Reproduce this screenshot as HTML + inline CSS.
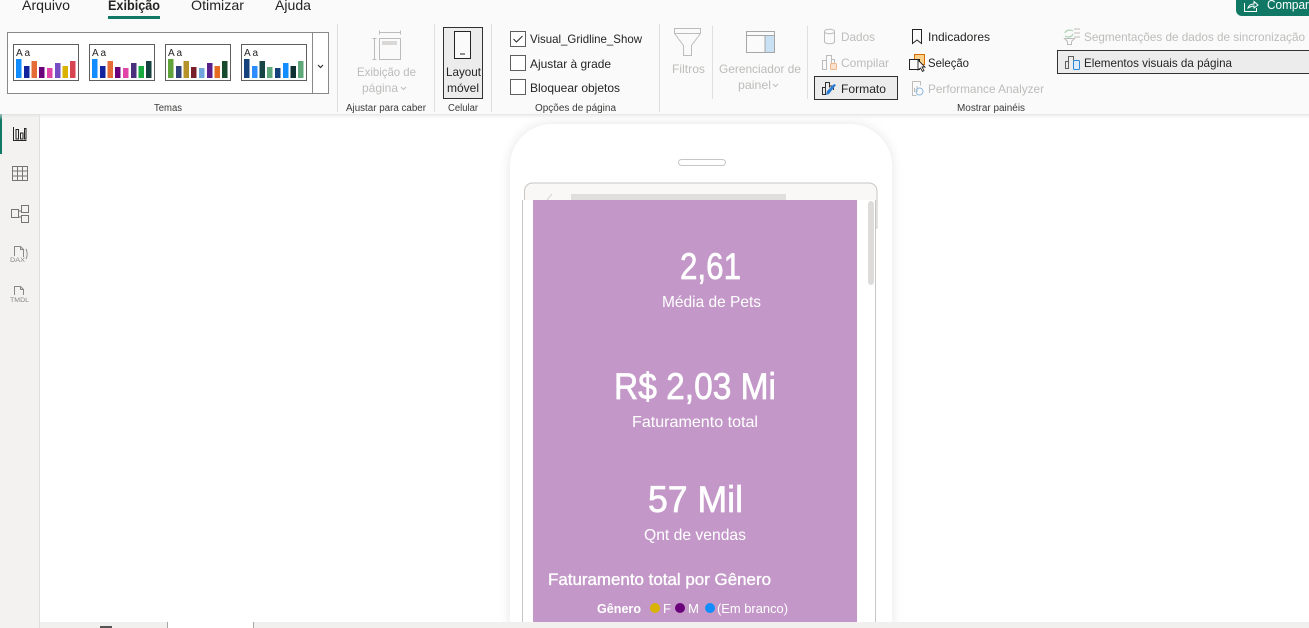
<!DOCTYPE html>
<html lang="pt"><head><meta charset="utf-8"><title>Power BI Desktop</title>
<style>
html,body{margin:0;padding:0;width:1309px;height:628px;overflow:hidden;background:#fff}
svg{display:block}
text{font-family:"Liberation Sans",sans-serif;fill:#252423}
.d{fill:#bdbcba}
.s{font-size:10px;fill:#3b3a39}
.t{font-size:12px}
.w{fill:#fff}
.b{stroke:#fff;stroke-width:.7px}
.m{stroke:#fff;stroke-width:.35px}
.sep{stroke:#e1dfdd;stroke-width:1}
.ic{fill:none;stroke:#bdbcba;stroke-width:1}
</style></head><body>
<svg width="1309" height="628" viewBox="0 0 1309 628" xmlns="http://www.w3.org/2000/svg">
<defs>
<filter id="sh" x="-20%" y="-20%" width="140%" height="140%"><feGaussianBlur stdDeviation="6"/></filter>
<linearGradient id="rs" x1="0" y1="0" x2="0" y2="1"><stop offset="0" stop-color="#d9d9d9"/><stop offset="1" stop-color="#fff" stop-opacity="0"/></linearGradient>
<clipPath id="page"><rect width="1309" height="628"/></clipPath>
</defs>
<g clip-path="url(#page)">
<rect width="1309" height="628" fill="#fff"/>
<!-- phone -->
<path d="M510 628V166a42 42 0 0 1 42-42H850a42 42 0 0 1 42 42V628Z" fill="#000" opacity=".1" filter="url(#sh)"/>
<path d="M510 628V166a42 42 0 0 1 42-42H850a42 42 0 0 1 42 42V628Z" fill="#fff"/>
<rect x="678.500" y="159.500" width="47" height="6" rx="3" fill="#fff" stroke="#c8c6c4"/>
<path d="M524.500 228V191a8 8 0 0 1 8-8H869a8 8 0 0 1 8 8V228Z" fill="#f9f8f6" stroke="#c8c6c4"/>
<rect x="571" y="194" width="215" height="6" fill="#e1dfdc"/>
<path d="M552 194l-5 6" stroke="#d8d6d4" fill="none"/>
<rect x="523" y="200" width="353" height="428" fill="#fff"/>
<path d="M522.500 200V628M875.500 200V628" stroke="#c8c6c4" fill="none"/>
<rect x="533" y="200" width="324" height="428" fill="#c398c8"/>
<rect x="868" y="201" width="6" height="84" rx="3" fill="#dedcda"/>
<text x="680" y="279" class="w b" font-size="37" textLength="61" lengthAdjust="spacingAndGlyphs">2,61</text>
<text x="662" y="307" class="w" font-size="16" textLength="99" lengthAdjust="spacingAndGlyphs">Média de Pets</text>
<text x="614" y="399" class="w b" font-size="37" textLength="162" lengthAdjust="spacingAndGlyphs">R$ 2,03 Mi</text>
<text x="632" y="427" class="w" font-size="16" textLength="126" lengthAdjust="spacingAndGlyphs">Faturamento total</text>
<text x="648" y="512" class="w b" font-size="37" textLength="95" lengthAdjust="spacingAndGlyphs">57 Mil</text>
<text x="644" y="540" class="w" font-size="16" textLength="102" lengthAdjust="spacingAndGlyphs">Qnt de vendas</text>
<text x="548" y="585" class="w m" font-size="16.500" textLength="223" lengthAdjust="spacingAndGlyphs">Faturamento total por Gênero</text>
<text x="597" y="613" class="w" font-size="13" font-weight="700" textLength="44" lengthAdjust="spacingAndGlyphs">Gênero</text>
<circle cx="655" cy="608" r="5" fill="#d9b300"/>
<text x="663" y="613" class="w" font-size="13" textLength="6">F</text>
<circle cx="680" cy="608" r="5" fill="#6b007b"/>
<text x="688" y="613" class="w" font-size="13" textLength="11" lengthAdjust="spacingAndGlyphs">M</text>
<circle cx="710" cy="608" r="5" fill="#118dff"/>
<text x="717" y="613" class="w" font-size="13" textLength="71" lengthAdjust="spacingAndGlyphs">(Em branco)</text>
<!-- bottom strip -->
<rect x="40" y="622" width="1269" height="6" fill="#f1f0ee"/>
<rect x="168" y="622" width="85" height="6" fill="#fff"/>
<path d="M167.500 622V628M253.500 622V628" stroke="#a8a6a4"/>
<rect x="100" y="626" width="12" height="2" fill="#555"/>
<!-- left rail -->
<rect x="0" y="114" width="39" height="514" fill="#f3f2f1"/>
<rect x="39" y="114" width="1" height="514" fill="#e1dfdd"/>
<rect x="0" y="114" width="2" height="40" fill="#117865"/>
<path d="M13.500 127V140.500H26.500M16 129.500h2.500V139H16ZM20.500 133h2.500v6h-2.500ZM24.500 128.500H26V139h-1.500Z" fill="none" stroke="#252423"/>
<path d="M12.500 166.500h15v14h-15ZM12.500 171h15M12.500 176h15M17.500 167v14M22.500 167v14" fill="none" stroke="#757575"/>
<path d="M11.500 209.500h7v8h-7ZM21.500 205.500h7v7h-7ZM21.500 215.500h7v7h-7ZM18.500 211h3M18.500 217h3" fill="none" stroke="#757575"/>
<path d="M14.500 256v-9.500h6l3 3V257M20.500 246.500v3h3M26 249c1.500 3 1.500 7 0 10" fill="none" stroke="#8a8886"/>
<text x="10" y="262" font-size="6.500" style="fill:#8a8886" textLength="15" lengthAdjust="spacingAndGlyphs">DAX</text>
<path d="M14.500 295v-8.500h6l3 3V295M20.500 286.500v3h3" fill="none" stroke="#8a8886"/>
<text x="10" y="302" font-size="6.500" style="fill:#8a8886" textLength="19" lengthAdjust="spacingAndGlyphs">TMDL</text>
<!-- ribbon -->
<rect x="0" y="114" width="1309" height="6" fill="url(#rs)" opacity=".7"/>
<rect x="0" y="0" width="1309" height="114" fill="#fafafa"/>
<text x="22" y="10" font-size="14" textLength="48" lengthAdjust="spacingAndGlyphs">Arquivo</text>
<text x="108" y="10" font-size="14" font-weight="700" textLength="52" lengthAdjust="spacingAndGlyphs">Exibição</text>
<rect x="108" y="16" width="52" height="3" fill="#117865"/>
<text x="191" y="10" font-size="14" textLength="53" lengthAdjust="spacingAndGlyphs">Otimizar</text>
<text x="275" y="10" font-size="14" textLength="36" lengthAdjust="spacingAndGlyphs">Ajuda</text>
<!-- gallery -->
<rect x="7.500" y="32.500" width="321" height="61" fill="#fff" stroke="#8a8886"/>
<path d="M312.500 33V93" stroke="#8a8886"/>
<path d="M318 65l2.500 2.500L323 65" fill="none" stroke="#323130" stroke-width="1.200"/>
<g><rect x="13.500" y="44.500" width="65" height="36" fill="#fff" stroke="#605e5c"/>
<text x="16" y="56" font-size="10" textLength="14">Aa</text>
<rect x="16" y="59" width="5.500" height="19" fill="#118dff"/><rect x="24" y="66" width="5.500" height="12" fill="#12239e"/><rect x="31.500" y="61" width="5.500" height="17" fill="#e66c37"/><rect x="39" y="67" width="5.500" height="11" fill="#6b007b"/><rect x="47" y="68" width="5.500" height="10" fill="#e044a7"/><rect x="55" y="63" width="5.500" height="15" fill="#744ec2"/><rect x="62.500" y="66" width="5.500" height="12" fill="#d9b300"/><rect x="70" y="61" width="5.500" height="17" fill="#d64550"/></g>
<g transform="translate(76)"><rect x="13.500" y="44.500" width="65" height="36" fill="#fff" stroke="#605e5c"/>
<text x="16" y="56" font-size="10" textLength="14">Aa</text>
<rect x="16" y="59" width="5.500" height="19" fill="#118dff"/><rect x="24" y="66" width="5.500" height="12" fill="#12239e"/><rect x="31.500" y="61" width="5.500" height="17" fill="#e66c37"/><rect x="39" y="67" width="5.500" height="11" fill="#6b007b"/><rect x="47" y="68" width="5.500" height="10" fill="#e044a7"/><rect x="55" y="63" width="5.500" height="15" fill="#4a2f7c"/><rect x="62.500" y="66" width="5.500" height="12" fill="#1aab40"/><rect x="70" y="61" width="5.500" height="17" fill="#15413f"/></g>
<g transform="translate(152)"><rect x="13.500" y="44.500" width="65" height="36" fill="#fff" stroke="#605e5c"/>
<text x="16" y="56" font-size="10" textLength="14">Aa</text>
<rect x="16" y="59" width="5.500" height="19" fill="#5fa33a"/><rect x="24" y="66" width="5.500" height="12" fill="#2e3f7a"/><rect x="31.500" y="61" width="5.500" height="17" fill="#b5932a"/><rect x="39" y="67" width="5.500" height="11" fill="#7a1f2a"/><rect x="47" y="68" width="5.500" height="10" fill="#6fa5dc"/><rect x="55" y="63" width="5.500" height="15" fill="#5b1f8c"/><rect x="62.500" y="66" width="5.500" height="12" fill="#e66c1f"/><rect x="70" y="61" width="5.500" height="17" fill="#174a2a"/></g>
<g transform="translate(228)"><rect x="13.500" y="44.500" width="65" height="36" fill="#fff" stroke="#605e5c"/>
<text x="16" y="56" font-size="10" textLength="14">Aa</text>
<rect x="16" y="59" width="5.500" height="19" fill="#15427a"/><rect x="24" y="66" width="5.500" height="12" fill="#2d8cff"/><rect x="31.500" y="61" width="5.500" height="17" fill="#174545"/><rect x="39" y="67" width="5.500" height="11" fill="#5fa87a"/><rect x="47" y="68" width="5.500" height="10" fill="#15427a"/><rect x="55" y="63" width="5.500" height="15" fill="#118dff"/><rect x="62.500" y="66" width="5.500" height="12" fill="#0f3030"/><rect x="70" y="61" width="5.500" height="17" fill="#5fa87a"/></g>
<text x="154" y="111" class="s" textLength="28" lengthAdjust="spacingAndGlyphs">Temas</text>
<path class="sep" d="M337.500 24V112M434.500 24V112M491.500 24V112M659.500 24V112M712.500 26V99M807.500 26V99"/>
<!-- page view -->
<path class="ic" d="M379.500 32.500H400M379.500 30.500v4M400.500 30.500v4M372.500 38.500h4M372.500 59.500h4M374.500 38.500v21M379.500 38.500h21v21h-21Z"/>
<rect x="382" y="41" width="15" height="4" fill="#d9d8d6"/>
<text x="357" y="76" class="t d" textLength="59" lengthAdjust="spacingAndGlyphs">Exibição de</text>
<text x="362" y="92" class="t d" textLength="36" lengthAdjust="spacingAndGlyphs">página</text>
<path d="M401 87l2.500 2.500L406 87" fill="none" stroke="#bdbcba"/>
<text x="346" y="111" class="s" textLength="80" lengthAdjust="spacingAndGlyphs">Ajustar para caber</text>
<!-- layout -->
<rect x="443.500" y="27.500" width="39" height="71" fill="#ececec" stroke="#323130"/>
<rect x="454.500" y="31.500" width="16" height="27" fill="#fafafa" stroke="#252423"/>
<path d="M460 54h5" stroke="#252423"/>
<text x="446" y="76" class="t" textLength="35" lengthAdjust="spacingAndGlyphs">Layout</text>
<text x="447" y="92" class="t" textLength="32" lengthAdjust="spacingAndGlyphs">móvel</text>
<text x="448" y="111" class="s" textLength="30" lengthAdjust="spacingAndGlyphs">Celular</text>
<!-- page options -->
<rect x="510.500" y="31.500" width="15" height="15" fill="#fff" stroke="#605e5c"/>
<path d="M513.500 39l3 3 6-6" fill="none" stroke="#252423"/>
<rect x="510.500" y="55.500" width="15" height="15" fill="#fff" stroke="#605e5c"/>
<rect x="510.500" y="79.500" width="15" height="15" fill="#fff" stroke="#605e5c"/>
<text x="530" y="43" class="t" textLength="112" lengthAdjust="spacingAndGlyphs">Visual_Gridline_Show</text>
<text x="530" y="68" class="t" textLength="81" lengthAdjust="spacingAndGlyphs">Ajustar à grade</text>
<text x="530" y="92" class="t" textLength="90" lengthAdjust="spacingAndGlyphs">Bloquear objetos</text>
<text x="535" y="111" class="s" textLength="81" lengthAdjust="spacingAndGlyphs">Opções de página</text>
<!-- filters -->
<path class="ic" d="M674.500 28.500h26v5l-9 12v10h-8v-10l-9-12ZM674.500 33.500h26" stroke-width="1.200"/>
<text x="672" y="73" class="t d" textLength="33" lengthAdjust="spacingAndGlyphs">Filtros</text>
<rect x="765" y="36" width="9" height="16" fill="#c7e0f4"/>
<rect x="746.500" y="31.500" width="28" height="21" fill="none" stroke="#a8a6a4"/>
<path d="M747 35.500h27M765 36v16" stroke="#a8a6a4"/>
<text x="719" y="73" class="t d" textLength="82" lengthAdjust="spacingAndGlyphs">Gerenciador de</text>
<text x="738" y="89" class="t d" textLength="33" lengthAdjust="spacingAndGlyphs">painel</text>
<path d="M773 84l2.500 2.500L778 84" fill="none" stroke="#bdbcba"/>
<!-- panes -->
<path class="ic" d="M824.500 31.500c0-3 10-3 10 0v10c0 3-10 3-10 0ZM824.500 31.500c0 3 10 3 10 0"/>
<text x="841" y="41" class="t d" textLength="34" lengthAdjust="spacingAndGlyphs">Dados</text>
<path class="ic" d="M822.500 69.500v-9h4v9ZM826.500 69.500v-14h5v8M831.500 59.500h3v4"/>
<rect x="830.500" y="63.500" width="6" height="6" rx="1" fill="#fbe0cb" stroke="#f0b98d"/>
<text x="841" y="67" class="t d" textLength="48" lengthAdjust="spacingAndGlyphs">Compilar</text>
<rect x="814.500" y="76.500" width="83" height="23" fill="#ececec" stroke="#323130"/>
<path d="M822.500 94.500v-7h3v7ZM825.500 94.500v-12h4v5M829.500 86h4v4" fill="none" stroke="#323130"/>
<path d="M826 95l3-1 7-9-2-1-7 7Z" fill="#2b7cd3"/>
<text x="841" y="93" class="t" textLength="45" lengthAdjust="spacingAndGlyphs">Formato</text>
<path d="M912.500 29.500h9v14l-4.500-3.500-4.500 3.500Z" fill="none" stroke="#252423"/>
<text x="928" y="41" class="t" textLength="62" lengthAdjust="spacingAndGlyphs">Indicadores</text>
<rect x="914.500" y="54.500" width="10" height="10" fill="#fbd28b" stroke="#d86c00"/>
<rect x="909.500" y="59.500" width="10" height="10" fill="#fafafa" stroke="#252423"/>
<path d="M918 60v10l2.500-2 2 3.500 1.500-1-2-3.500 3 0Z" fill="#fff" stroke="#252423" stroke-width=".9"/>
<text x="928" y="67" class="t" textLength="41" lengthAdjust="spacingAndGlyphs">Seleção</text>
<path class="ic" d="M912.500 81.500h8v4M912.500 81.500v14h4M914.500 92v-4M917 92v-6"/>
<circle cx="919.500" cy="91.500" r="3.500" fill="none" stroke="#8dbbe3"/>
<text x="928" y="93" class="t d" textLength="116" lengthAdjust="spacingAndGlyphs">Performance Analyzer</text>
<text x="957" y="111" class="s" textLength="68" lengthAdjust="spacingAndGlyphs">Mostrar painéis</text>
<!-- right -->
<path d="M1065 33a5 4 0 0 1 8-2M1073 34a5 4 0 0 1-8 2" fill="none" stroke="#a9d3b3" stroke-width="1.200"/>
<path class="ic" d="M1074 29h6M1074 33h6M1074 37h6M1064.500 38.500h10l-3 3v3h-4v-3Z"/>
<text x="1084" y="41" class="t d" textLength="221" lengthAdjust="spacingAndGlyphs">Segmentações de dados de sincronização</text>
<path d="M1309 50.500H1057.500V73.500H1309Z" fill="#ececec"/>
<path d="M1309 50.500H1057.500V73.500H1309" fill="none" stroke="#323130"/>
<path d="M1065.500 68.500v-7h3v7ZM1068.500 68.500v-12h5v4" fill="none" stroke="#605e5c"/>
<rect x="1073.500" y="60.500" width="6" height="9" rx="1" fill="#deecf9" stroke="#2b88d8"/>
<text x="1084" y="67" class="t" textLength="148" lengthAdjust="spacingAndGlyphs">Elementos visuais da página</text>
<path d="M1236 0H1309V16H1242a6 6 0 0 1-6-6Z" fill="#117865"/>
<path d="M1244.500 3v8.500h12V8M1248 8c1-3 3-4 6-4V1.500l4 3.500-4 3V6c-3 0-4 1-6 2Z" fill="none" stroke="#fff"/>
<text x="1267" y="9" class="w" font-size="13" textLength="42" lengthAdjust="spacingAndGlyphs">Compar</text>
</g>
</svg>
</body></html>
